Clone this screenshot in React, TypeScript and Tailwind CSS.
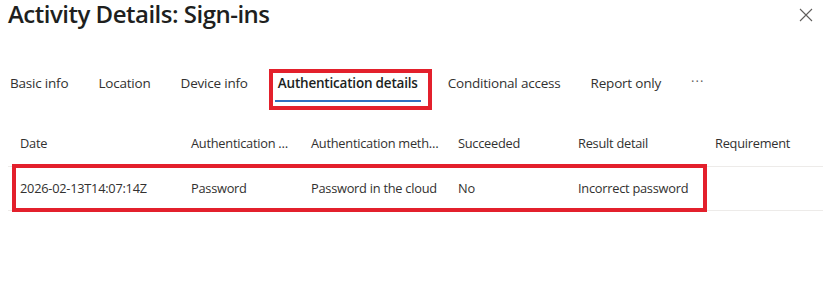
import React from 'react';

const tabs = ['Basic info', 'Location', 'Device info', 'Authentication details', 'Conditional access', 'Report only'];

const cols = [
  { label: 'Date', value: '2026-02-13T14:07:14Z' },
  { label: 'Authentication method', value: 'Password' },
  { label: 'Authentication method detail', value: 'Password in the cloud' },
  { label: 'Succeeded', value: 'No' },
  { label: 'Result detail', value: 'Incorrect password' },
  { label: 'Requirement', value: '' },
];

const gridCols = 'grid grid-cols-[175px_120px_147px_120px_137px_116px]';

export default function App() {
  return (
    <div className="w-[834px] h-[307px] bg-white text-[#323130] font-['Open_Sans','Noto_Sans',sans-serif] overflow-hidden">
      <div className="flex items-start justify-between pl-[8px]">
        <h1 className="text-[24px] leading-[30px] -mt-[1px] font-semibold tracking-[-0.5px] text-[#201f1e]">Activity Details: Sign-ins</h1>
        <button className="mt-[8px] mr-[21px] text-[#605e5c]" aria-label="Close">
          <svg width="14" height="14" viewBox="0 0 14 14" fill="none" stroke="currentColor" strokeWidth="1.1">
            <path d="M1 1L13 13M13 1L1 13" />
          </svg>
        </button>
      </div>

      <div className="mt-[37px] flex items-stretch gap-[24px] pl-[7px] h-[36px]">
        {tabs.map((t) => {
          const active = t === 'Authentication details';
          return (
            <div key={t} className="relative flex items-center px-[3px] pb-[2px]">
              <span className={`text-[13.5px] tracking-[-0.2px] ${active ? 'font-semibold text-[#201f1e]' : ''}`}>{t}</span>
              {active && (
                <>
                  <span className="absolute left-0 right-0 bottom-0 h-[2px] bg-[#2f6fbf]" />
                  <span className="absolute left-[-6px] right-[-11px] top-[3px] bottom-[-8px] border-[4px] border-[#e3202c]" />
                </>
              )}
            </div>
          );
        })}
        <div className="flex items-center px-[3px] pb-[4px] text-[13px] text-[#605e5c] tracking-[1px]">···</div>
      </div>

      <div className="mt-[20px] ml-[8px] w-[815px] text-[12.8px] tracking-[-0.25px]">
        <div className={`${gridCols} h-[45px] border-b border-[#edebe9] items-center`}>
          {cols.map((c, i) => (
            <div key={c.label} title={c.label} className={`truncate ${i === 0 ? 'pl-[12px] pr-[8px]' : 'px-[8px]'}`}>{c.label}</div>
          ))}
        </div>
        <div className={`relative ${gridCols} h-[44px] border-b border-[#edebe9] items-center`}>
          {cols.map((c, i) => (
            <div key={c.label} className={`truncate ${i === 0 ? 'pl-[12px] pr-[8px]' : 'px-[8px]'}`}>{c.value}</div>
          ))}
          <span className="absolute left-[4px] top-[-3px] w-[695px] h-[48px] border-[4px] border-[#e3202c]" />
        </div>
      </div>
    </div>
  );
}
